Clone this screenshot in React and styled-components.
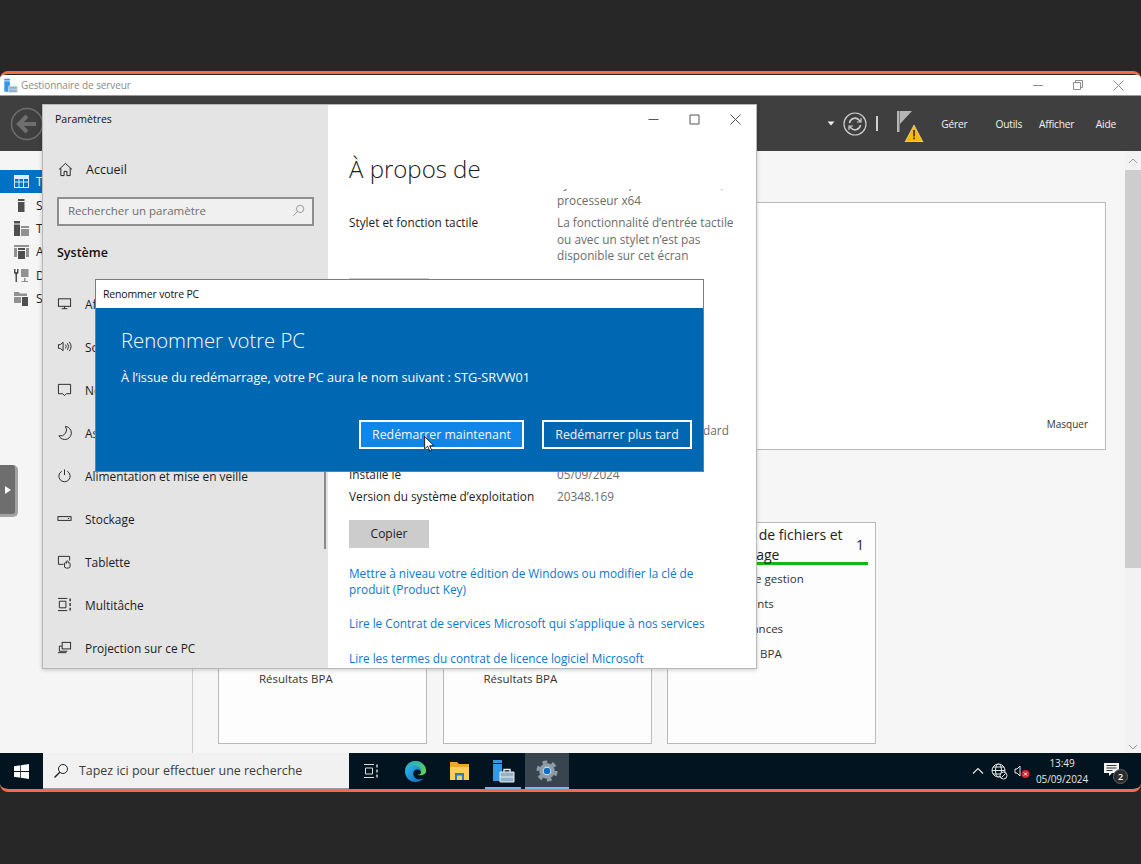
import React from "react";
import styled, { createGlobalStyle } from "styled-components";

const GlobalStyle = createGlobalStyle`
  html, body { margin: 0; padding: 0; background: #272727; }
  body { font-family: "Open Sans", "Noto Sans", sans-serif; height: 864px; overflow: hidden; }
  * { box-sizing: border-box; }
`;

const Screen = styled.div`
  position: relative;
  margin-top: 71px;
  height: 721px;
  border: solid #f26d45;
  border-width: 3px 0;
  border-radius: 8px;
  overflow: hidden;
  display: flex;
  flex-direction: column;
  background: #f5f5f5;
`;

/* ---- gestionnaire de serveur ---- */
const TitleBar = styled.div`
  height: 22px;
  flex: none;
  background: #fff;
  border-top: 1px solid #222;
  border-bottom: 1px solid #9a9a9a;
  display: flex;
  align-items: center;
  padding: 0 17px 0 3px;
  gap: 3px;
`;

const TitleText = styled.span`
  flex: 1;
  font-size: 10px;
  letter-spacing: -0.1px;
  color: #8b8b8b;
`;

const WinControls = styled.div`
  display: flex;
  align-items: center;
  gap: ${(p) => p.$gap}px;
  color: ${(p) => p.$color};
`;

const Toolbar = styled.div`
  height: 55px;
  flex: none;
  background: #3f3f3f;
  display: flex;
  align-items: center;
  padding: 0 25px 0 10px;
`;

const ToolRight = styled.div`
  margin-left: auto;
  display: flex;
  align-items: center;
`;

const Separator = styled.span`
  width: 2px;
  height: 15px;
  background: #cfcfcf;
  margin: 0 19px 0 9px;
`;

const ToolMenu = styled.span`
  font-size: 10.2px;
  letter-spacing: -0.2px;
  color: #f2f2f2;
  margin-left: ${(p) => p.$left}px;
`;

const Main = styled.div`
  flex: 1;
  min-height: 0;
  display: flex;
`;

const Sidebar = styled.div`
  width: 193px;
  flex: none;
  padding-top: 19px;
  background: #f5f5f5;
  border-right: 1px solid #cfcfcf;
`;

const SideItem = styled.div`
  height: 23.4px;
  display: flex;
  align-items: center;
  gap: 7px;
  padding-left: 14px;
  font-size: 12px;
  white-space: nowrap;
  color: ${(p) => (p.$active ? "#fff" : "#222")};
  background: ${(p) => (p.$active ? "#0072c6" : "transparent")};
`;

const Content = styled.div`
  flex: 1;
  min-width: 0;
  padding: 51px 19px 0 25px;
  background: #f6f6f6;
`;

const WelcomeBox = styled.div`
  height: 248px;
  background: #fff;
  border: 1px solid #b9b9b9;
  display: flex;
  align-items: flex-end;
  justify-content: flex-end;
  padding: 0 17px 18px 0;
  font-size: 10px;
  color: #333;
`;

const Cards = styled.div`
  margin-top: 72px;
  display: grid;
  grid-template-columns: repeat(3, 209px);
  gap: 15.5px;
`;

const Card = styled.div`
  height: 222px;
  background: #fdfdfd;
  border: 1px solid #b9b9b9;
  padding: 1px 7px 0 8px;
`;

const CardHead = styled.div`
  height: 41px;
  border-bottom: 3px solid #12b812;
  display: flex;
  align-items: center;
  justify-content: space-between;
  padding: 4px 4px 0 26px;
  font-size: 14px;
  line-height: 20px;
  color: #222;
`;

const CardTitle = styled.span`
  width: 150px;
`;

const CardList = styled.div`
  padding: 1px 0 0 32px;
`;

const CardItem = styled.div`
  height: 25px;
  line-height: 25px;
  font-size: 11.5px;
  color: #333;
`;

const SideTab = styled.div`
  position: absolute;
  left: 0;
  top: 391px;
  width: 18px;
  height: 52px;
  background: #6e6e6e;
  border-right: 3px solid #a3a3a3;
  border-bottom: 3px solid #a3a3a3;
  border-radius: 0 5px 5px 0;
  display: flex;
  align-items: center;
  justify-content: center;
`;

const ScrollTrack = styled.div`
  width: 16px;
  flex: none;
  background: #f2f2f2;
  display: flex;
  flex-direction: column;
  align-items: center;
  color: #999;
`;

const ScrollThumb = styled.div`
  width: 16px;
  height: 398px;
  margin-top: 3px;
  background: #cdcdcd;
`;

const ScrollGap = styled.div`
  flex: 1;
`;

/* ---- fenetre parametres ---- */
const SettingsWindow = styled.div`
  position: absolute;
  left: 42px;
  top: 30px;
  width: 715px;
  height: 565px;
  display: flex;
  background: #fff;
  border: 1px solid #b8b8b8;
  box-shadow: 0 1px 4px rgba(0, 0, 0, 0.2);
`;

const LeftPane = styled.div`
  width: 285px;
  flex: none;
  background: #e4e4e4;
  position: relative;
  overflow: hidden;
  padding: 0 14px;
`;

const PaneTitle = styled.div`
  height: 28px;
  display: flex;
  align-items: center;
  font-size: 10.5px;
  color: #111;
  margin-left: -2px;
`;

const HomeRow = styled.div`
  height: 36px;
  margin-top: 18px;
  display: flex;
  align-items: center;
  gap: 13px;
  padding-left: 1px;
  font-size: 12.5px;
  color: #1c1c1c;
`;

const SearchBox = styled.div`
  height: 29px;
  margin-top: 10px;
  width: 257px;
  background: #f0f0f0;
  border: 2px solid #8e8e8e;
  display: flex;
  align-items: center;
  justify-content: space-between;
  padding: 0 7px 2px 9px;
  font-size: 11.5px;
  color: #6d6d6d;
`;

const SectionName = styled.div`
  height: 20px;
  margin: 16px 0 20px;
  display: flex;
  align-items: center;
  font-size: 12.5px;
  font-weight: 600;
  color: #111;
`;

const NavRow = styled.div`
  height: 43px;
  display: flex;
  align-items: center;
  gap: 13px;
  font-size: 11.9px;
  color: #1c1c1c;
  white-space: nowrap;
`;

const NavIcon = styled.span`
  width: 15px;
  display: flex;
  justify-content: center;
  color: #222;
`;

const PaneScroll = styled.div`
  position: absolute;
  right: 2px;
  top: 360px;
  width: 2px;
  height: 84px;
  background: #8b8b8b;
`;

const RightPane = styled.div`
  flex: 1;
  min-width: 0;
  display: flex;
  flex-direction: column;
`;

const RightTop = styled.div`
  height: 28px;
  flex: none;
  display: flex;
  justify-content: flex-end;
  align-items: center;
  padding-right: 15px;
`;

const PageTitle = styled.h1`
  margin: 0;
  height: 56px;
  flex: none;
  padding: 14px 0 0 21px;
  font-size: 24px;
  line-height: 44px;
  font-weight: 300;
  color: #1b1b1b;
`;

const ScrollArea = styled.div`
  flex: 1;
  min-height: 0;
  overflow: hidden;
  padding-left: 21px;
`;

const ScrollInner = styled.div`
  margin-top: -14px;
`;

const SpecRow = styled.div`
  display: grid;
  grid-template-columns: 208px 190px;
  margin-bottom: ${(p) => p.$after || 0}px;
  font-size: 11.8px;
  line-height: 16.5px;
  min-height: 22px;
`;

const SpecLabel = styled.div`
  color: #1c1c1c;
`;

const SpecValue = styled.div`
  color: #6c6c6c;
  white-space: ${(p) => (p.$nowrap ? "nowrap" : "normal")};
`;

const CopyButton = styled.div`
  width: 80px;
  height: 28px;
  background: #cccccc;
  display: flex;
  align-items: center;
  justify-content: center;
  font-size: 12px;
  color: #222;
  margin: ${(p) => p.$margin};
`;

const SectionHead = styled.div`
  height: 116px;
  padding-top: 26px;
  font-size: 19px;
  font-weight: 300;
  color: #1b1b1b;
`;

const Link = styled.div`
  width: 362px;
  font-size: 11.8px;
  line-height: 16px;
  color: #0a78d4;
  margin-bottom: ${(p) => p.$after}px;
`;

/* ---- dialogue renommer ---- */
const Dialog = styled.div`
  position: absolute;
  left: 95px;
  top: 205px;
  width: 609px;
  height: 193px;
  border: 1px solid #7c7c7c;
  display: flex;
  flex-direction: column;
`;

const DialogTitle = styled.div`
  height: 28px;
  flex: none;
  background: #fff;
  padding-left: 7px;
  display: flex;
  align-items: center;
  font-size: 10.5px;
  letter-spacing: -0.15px;
  color: #111;
`;

const DialogBody = styled.div`
  flex: 1;
  background: #0067b3;
  padding: 17px 11px 22px 25px;
  color: #fff;
  display: flex;
  flex-direction: column;
`;

const DialogHeading = styled.div`
  font-size: 20.3px;
  line-height: 30px;
  font-weight: 300;
`;

const DialogText = styled.div`
  margin-top: 13px;
  font-size: 12.7px;
  line-height: 18px;
`;

const DialogActions = styled.div`
  margin-top: auto;
  display: flex;
  justify-content: flex-end;
  gap: 18px;
`;

const DialogButton = styled.div`
  width: ${(p) => p.$width}px;
  height: 29px;
  border: 2px solid #fff;
  background: ${(p) => (p.$primary ? "#0f86e8" : "#0067b3")};
  display: flex;
  align-items: center;
  justify-content: center;
  font-size: 12.3px;
  color: #f5f5f5;
`;

const Cursor = styled.svg`
  position: absolute;
  left: 424px;
  top: 362px;
`;

/* ---- barre des taches ---- */
const Taskbar = styled.div`
  height: 36px;
  flex: none;
  background: #02141f;
  display: flex;
  align-items: stretch;
`;

const StartButton = styled.div`
  width: 43px;
  display: flex;
  align-items: center;
  justify-content: center;
`;

const TaskSearch = styled.div`
  width: 306px;
  background: #f1f1f1;
  border-bottom: 1px solid #9c9c9c;
  display: flex;
  align-items: center;
  gap: 10px;
  padding-left: 10px;
  font-size: 12.45px;
  color: #3c3c3c;
`;

const TaskIcon = styled.div`
  position: relative;
  width: 44px;
  display: flex;
  align-items: center;
  justify-content: center;
  background: ${(p) => (p.$active ? "#38454e" : "transparent")};

  &::after {
    content: "";
    display: ${(p) => (p.$open ? "block" : "none")};
    position: absolute;
    bottom: 0;
    left: ${(p) => (p.$active ? 0 : 4)}px;
    right: ${(p) => (p.$active ? 0 : 4)}px;
    height: 2px;
    background: #76b9ed;
  }
`;

const Tray = styled.div`
  margin-left: auto;
  display: flex;
  align-items: center;
  color: #e6e6e6;
  padding-right: 17px;
`;

const Clock = styled.div`
  width: 62px;
  margin: 0 11px 0 0;
  text-align: center;
  font-size: 10px;
  line-height: 16px;
  letter-spacing: -0.1px;
  color: #e8e8e8;
`;

const TrayGap = styled.span`
  width: ${(p) => p.$w}px;
`;

const Notif = styled.div`
  position: relative;
  width: 20px;
  height: 20px;
`;

const NotifBadge = styled.span`
  position: absolute;
  right: -4px;
  bottom: -3px;
  width: 15px;
  height: 15px;
  border-radius: 50%;
  background: #2b2b2b;
  border: 1px solid #666;
  display: flex;
  align-items: center;
  justify-content: center;
  font-size: 9px;
  font-weight: 600;
  color: #fff;
`;

/* ---- icones ---- */
const Line = ({ size = 16, children, ...rest }) => (
  <svg width={size} height={size} viewBox="0 0 16 16" fill="none" stroke="currentColor" strokeWidth="1" {...rest}>
    {children}
  </svg>
);

const navIcons = {
  display: <><rect x="1.5" y="3" width="13" height="8" /><path d="M8 11v2.5M5 13.5h6" /></>,
  sound: <><path d="M1.5 6v4h2l3 2.5v-9L3.5 6z" /><path d="M9 6a3 3 0 0 1 0 4M11 4.5a5.5 5.5 0 0 1 0 7M13 3a8 8 0 0 1 0 10" /></>,
  notif: <path d="M1.5 2.5h13v10H10l-2 2-2-2H1.5z" />,
  moon: <path d="M9 1.5A7 7 0 1 1 2 11.5 6.5 6.5 0 0 0 9 1.5z" />,
  power: <><path d="M8 1.5v6" /><path d="M5 3.5a6 6 0 1 0 6 0" /></>,
  storage: <><rect x="1" y="6" width="14" height="4" /><path d="M11.5 8h1.5" /></>,
  tablet: <><path d="M7 11H1.5V2.500h12V7" /><path d="M8 14v-4c0-1 2-1 2 0V8c0-1 2-1 2 0v1.500c1-.5 2 0 2 1V13a2 2 0 0 1-2 2H10z" /></>,
  multi: <><path d="M1 1.500h10M1 14.500h10M2.500 4.500h7v7h-7z" /><path d="M14 1.500v3M14 6.500v3M14 11.500v3" strokeWidth="1.400" /></>,
  project: <><rect x="5.500" y="2.500" width="9" height="7" /><path d="M5.500 6.500H2.500V12H11M1 13.500h9" /></>,
};

const navItems = [
  ["display", "Affichage"],
  ["sound", "Son"],
  ["notif", "Notifications et actions"],
  ["moon", "Assistant de concentration"],
  ["power", "Alimentation et mise en veille"],
  ["storage", "Stockage"],
  ["tablet", "Tablette"],
  ["multi", "Multitâche"],
  ["project", "Projection sur ce PC"],
];

const sideItems = [
  ["#dbeaf6", "Tableau de bord"],
  ["#4f4f4f", "Serveur local"],
  ["#4f4f4f", "Tous les serveurs"],
  ["#4f4f4f", "AD DS"],
  ["#4f4f4f", "DNS"],
  ["#4f4f4f", "Services de fichiers"],
];

const SideGlyph = ({ color, index }) => (
  <svg width="15" height="15" viewBox="0 0 15 15" fill={color}>
    {index === 0 && <path d="M0 1h15v13H0zM1 5v2.500h3.500V5zM5.500 5v2.500H9V5zM10 5v2.500h4V5zM1 8.500V13h3.500V8.500zM5.500 8.500V13H9V8.500zM10 8.500V13h4V8.500z" fillRule="evenodd" />}
    {index === 1 && <path d="M4 1h6.500v2H4zM4 4h6.500v10H4z" />}
    {index === 2 && (
      <>
        <path d="M0 0h6v2.500H0zM0 3.500h6V15H0z" />
        <path d="M7 5h8v2H7zM7 8h8v7H7z" opacity=".6" />
      </>
    )}
    {index === 3 && (
      <>
        <path d="M0 1h15v2H0zM0 4h3v9H0zM12 4h3v9h-3z" opacity=".6" />
        <path d="M4 4h7v2H4zM4 7h7v8H4z" />
      </>
    )}
    {index === 4 && (
      <>
        <path d="M0 1h1.500v3H3V1h1.500v4L3 6.500V14H1.500V6.500L0 5z" />
        <path d="M7 1h7.500v8H7zM10 10h1.500v3H14v1H7.500v-1H10z" opacity=".6" />
      </>
    )}
    {index === 5 && (
      <>
        <path d="M0 1h5l1 1.500h7V5H0zM0 6h7v6H0z" opacity=".6" />
        <path d="M8 6h6v9H8z" />
      </>
    )}
  </svg>
);

const ServerManagerIcon = ({ size }) => (
  <svg width={size} height={size} viewBox="0 0 24 24">
    <path d="M2 1h9v3H2z" fill="#2f9be8" />
    <path d="M2 5h9v17H2z" fill="#2f9be8" />
    <path d="M9 13h14v10H9z" fill="#8fb1c9" stroke="#e8eef2" strokeWidth="1" />
    <path d="M13 13v-2.500h6V13" fill="none" stroke="#e8eef2" strokeWidth="1.400" />
    <path d="M9 18h14" stroke="#e8eef2" strokeWidth="1" />
  </svg>
);

const cardRows = ["Facilité de gestion", "Événements", "Services", "Performances", "Résultats BPA"];

const App = () => (
  <>
    <GlobalStyle />
    <Screen>
      <TitleBar>
        <ServerManagerIcon size={15} />
        <TitleText>Gestionnaire de serveur</TitleText>
        <WinControls $gap={29} $color="#8c8c8c">
          <Line size={11} viewBox="0 0 11 11"><path d="M0 5.500h10" /></Line>
          <Line size={11} viewBox="0 0 11 11"><path d="M.5 2.500h7v7h-7zM2.500 2.500v-2h7v7h-2" /></Line>
          <Line size={11} viewBox="0 0 11 11"><path d="M.5.5l10 10M10.500.5l-10 10" /></Line>
        </WinControls>
      </TitleBar>

      <Toolbar>
        <svg width="34" height="34" viewBox="0 0 34 34" fill="none">
          <circle cx="17" cy="17" r="15.500" stroke="#6f6f6f" strokeWidth="1.500" />
          <path d="M26 17H10M17 9l-8 8 8 8" stroke="#6f6f6f" strokeWidth="4" />
        </svg>
        <ToolRight>
          <svg width="8" height="5" viewBox="0 0 8 5" style={{ marginRight: 8 }}><path d="M.5.500h7L4 4.500z" fill="#eee" /></svg>
          <svg width="24" height="24" viewBox="0 0 24 24" fill="none" stroke="#cfcfcf">
            <circle cx="12" cy="12" r="11" strokeWidth="1.200" />
            <path d="M6.500 11a5.500 5.500 0 0 1 9.500-3l1.500 1.500M17.500 13A5.500 5.500 0 0 1 8 16l-1.500-1.500" strokeWidth="1.600" />
            <path d="M18 6v4h-4M6 18v-4h4" strokeWidth="1.200" />
          </svg>
          <Separator />
          <svg width="28" height="31" viewBox="0 0 28 31" style={{ marginTop: 5 }}>
            <path d="M0 0h2.500v21H0zM3 0h12L3 13z" fill="#b5b5b5" />
            <path d="M17 14l9 17H8z" fill="#fcb900" stroke="#fff" strokeWidth=".5" />
            <path d="M16.300 19h1.500v6.500h-1.500zM16.300 26.500h1.500v1.800h-1.500z" fill="#222" />
          </svg>
          <ToolMenu $left={16}>Gérer</ToolMenu>
          <ToolMenu $left={28}>Outils</ToolMenu>
          <ToolMenu $left={17}>Afficher</ToolMenu>
          <ToolMenu $left={21.5}>Aide</ToolMenu>
        </ToolRight>
      </Toolbar>

      <Main>
        <Sidebar>
          {sideItems.map(([color, label], i) => (
            <SideItem key={label} $active={i === 0}>
              <SideGlyph color={color} index={i} />
              {label}
            </SideItem>
          ))}
        </Sidebar>
        <Content>
          <WelcomeBox>Masquer</WelcomeBox>
          <Cards>
            <Card>
              <CardHead><CardTitle>AD DS</CardTitle>1</CardHead>
              <CardList>{cardRows.map((r) => <CardItem key={r}>{r}</CardItem>)}</CardList>
            </Card>
            <Card>
              <CardHead><CardTitle>DNS</CardTitle>1</CardHead>
              <CardList>{cardRows.map((r) => <CardItem key={r}>{r}</CardItem>)}</CardList>
            </Card>
            <Card>
              <CardHead><CardTitle>Services de fichiers et de stockage</CardTitle>1</CardHead>
              <CardList>
                {cardRows.filter((r) => r !== "Services").map((r) => <CardItem key={r}>{r}</CardItem>)}
              </CardList>
            </Card>
          </Cards>
        </Content>
        <ScrollTrack>
          <Line size={12} viewBox="0 0 12 12" style={{ marginTop: 4 }}><path d="M2 8l4-4 4 4" /></Line>
          <ScrollThumb />
          <ScrollGap />
          <Line size={12} viewBox="0 0 12 12"><path d="M2 4l4 4 4-4" /></Line>
        </ScrollTrack>
      </Main>

      <Taskbar>
        <StartButton>
          <svg width="15" height="15" viewBox="0 0 15 15" fill="#fff">
            <path d="M0 2.200l6.300-.9v5.800H0zM7 1.200L15 0v7.100H7zM0 7.900h6.300v5.800L0 12.800zM7 7.900h8V15l-8-1.200z" />
          </svg>
        </StartButton>
        <TaskSearch>
          <Line size={16} style={{ color: "#222" }}>
            <circle cx="10" cy="6" r="4.500" />
            <path d="M6.800 9.200L1.500 14.500" strokeWidth="1.400" />
          </Line>
          Tapez ici pour effectuer une recherche
        </TaskSearch>
        <TaskIcon>
          <Line size={16} style={{ color: "#ddd" }}>
            <path d="M1 1.500h10M1 14.500h10M2.500 5h7v6h-7z" />
            <path d="M14 1.500v3M14 6.500v3M14 11.500v3" strokeWidth="1.400" />
          </Line>
        </TaskIcon>
        <TaskIcon>
          <svg width="23" height="23" viewBox="0 0 24 24">
            <defs>
              <linearGradient id="edgeA" x1="0" y1="0" x2="1" y2="1">
                <stop offset="0" stopColor="#35c1f1" />
                <stop offset="1" stopColor="#0b62b8" />
              </linearGradient>
              <linearGradient id="edgeB" x1="0" y1="0" x2="1" y2="1">
                <stop offset="0" stopColor="#1aa5d8" />
                <stop offset="1" stopColor="#6fd840" />
              </linearGradient>
            </defs>
            <path d="M12 1a11 11 0 0 0-11 11c0 6 5 11 11 11 3.500 0 6.500-1.500 8.500-4-3 1.500-7 1.500-9-.5-2-2-2.500-5-1-7 .8-1 2-1.500 3.500-1.500 2.500 0 4 1.500 3.500 4h5c0-7-4.500-13-10.500-13z" fill="url(#edgeA)" />
            <path d="M12 1C6 1 1.500 5.500 1 11c2-4 6-6 10-5.500 4.500.5 7.500 3 7 7.500-.2 1.500-2 2.500-4 2 3 2 9 1 9-4C23 5.500 18 1 12 1z" fill="url(#edgeB)" />
          </svg>
        </TaskIcon>
        <TaskIcon>
          <svg width="21" height="19" viewBox="0 0 21 19">
            <path d="M1 0h7l2 2h10v3H1z" fill="#e8a92c" />
            <path d="M1 5h19v13H1z" fill="#f8cf5a" />
            <path d="M6 11h9v7H6z" fill="#2a7fc4" />
            <path d="M8 13.500h5V18H8z" fill="#f8cf5a" />
          </svg>
        </TaskIcon>
        <TaskIcon $open><ServerManagerIcon size={24} /></TaskIcon>
        <TaskIcon $open $active>
          <svg width="22" height="22" viewBox="0 0 22 22" fill="none">
            <circle cx="11" cy="11" r="9" stroke="#8f9ba5" strokeWidth="3.200" strokeDasharray="4.700 4.720" />
            <circle cx="11" cy="11" r="6" stroke="#8f9ba5" strokeWidth="3.600" />
            <circle cx="11" cy="11" r="4.400" fill="#d9e4ec" />
            <circle cx="11" cy="11" r="3.300" fill="#0f6cc8" />
          </svg>
        </TaskIcon>
        <Tray>
          <Line size={12} viewBox="0 0 12 12"><path d="M1 8.500l5-5 5 5" strokeWidth="1.200" /></Line>
          <TrayGap $w={7} />
          <svg width="17" height="17" viewBox="0 0 17 17" fill="none" stroke="#e6e6e6">
            <circle cx="7.500" cy="7.500" r="6.500" />
            <ellipse cx="7.500" cy="7.500" rx="3" ry="6.500" />
            <path d="M1 7.500h13M2 4h11M2 11h11" />
            <circle cx="12.500" cy="12.500" r="3.500" fill="#02141f" />
            <path d="M10.500 14.500l4-4" />
          </svg>
          <TrayGap $w={6} />
          <svg width="17" height="15" viewBox="0 0 17 15" fill="none">
            <path d="M1 5v4h2l3 3V2L3 5z" stroke="#e6e6e6" />
            <circle cx="11.500" cy="10" r="4" fill="#e3202f" />
            <path d="M10 8.500l3 3M13 8.500l-3 3" stroke="#fff" />
          </svg>
          <Clock>
            <div>13:49</div>
            <div>05/09/2024</div>
          </Clock>
          <Notif>
            <svg width="18" height="16" viewBox="0 0 18 16" fill="#f2f2f2">
              <path d="M0 1h15v10H8l-3 3v-3H0z" />
              <path d="M2.500 3.500h10M2.500 6h10M2.500 8.500h6" stroke="#333" />
            </svg>
            <NotifBadge>2</NotifBadge>
          </Notif>
        </Tray>
      </Taskbar>

      <SideTab>
        <svg width="6" height="8" viewBox="0 0 6 8"><path d="M0 0l6 4-6 4z" fill="#fff" /></svg>
      </SideTab>

      <SettingsWindow>
        <LeftPane>
          <PaneTitle>Paramètres</PaneTitle>
          <HomeRow>
            <Line size={15}><path d="M1 8l7-6.500L15 8M3 6.500V14.500h3.500V10h3v4.500H13V6.500" /></Line>
            Accueil
          </HomeRow>
          <SearchBox>
            Rechercher un paramètre
            <Line size={13} style={{ color: "#888" }}><circle cx="10" cy="6" r="4.500" /><path d="M6.800 9.200L1.500 14.500" /></Line>
          </SearchBox>
          <SectionName>Système</SectionName>
          {navItems.map(([icon, label]) => (
            <NavRow key={label}>
              <NavIcon><Line size={15}>{navIcons[icon]}</Line></NavIcon>
              {label}
            </NavRow>
          ))}
          <PaneScroll />
        </LeftPane>
        <RightPane>
          <RightTop>
            <WinControls $gap={30} $color="#555">
              <Line size={11} viewBox="0 0 11 11"><path d="M.5 5.500h10" /></Line>
              <Line size={11} viewBox="0 0 11 11"><path d="M1 1h9v9H1z" /></Line>
              <Line size={11} viewBox="0 0 11 11"><path d="M.5.5l10 10M10.500.5l-10 10" /></Line>
            </WinControls>
          </RightTop>
          <PageTitle>À propos de</PageTitle>
          <ScrollArea>
            <ScrollInner>
              <SpecRow $after={6}>
                <SpecLabel />
                <SpecValue>Système d’exploitation 64 bits, processeur x64</SpecValue>
              </SpecRow>
              <SpecRow $after={14}>
                <SpecLabel>Stylet et fonction tactile</SpecLabel>
                <SpecValue>La fonctionnalité d’entrée tactile ou avec un stylet n’est pas disponible sur cet écran</SpecValue>
              </SpecRow>
              <CopyButton>Copier</CopyButton>
              <SectionHead>Spécifications de Windows</SectionHead>
              <SpecRow><SpecLabel>Édition</SpecLabel><SpecValue $nowrap>Windows Server 2022 Standard</SpecValue></SpecRow>
              <SpecRow><SpecLabel>Version</SpecLabel><SpecValue>21H2</SpecValue></SpecRow>
              <SpecRow><SpecLabel>Installé le</SpecLabel><SpecValue>05/09/2024</SpecValue></SpecRow>
              <SpecRow><SpecLabel>Version du système d’exploitation</SpecLabel><SpecValue>20348.169</SpecValue></SpecRow>
              <CopyButton $margin="10px 0 17px">Copier</CopyButton>
              <Link $after={18}>Mettre à niveau votre édition de Windows ou modifier la clé de produit (Product Key)</Link>
              <Link $after={19}>Lire le Contrat de services Microsoft qui s’applique à nos services</Link>
              <Link $after={0}>Lire les termes du contrat de licence logiciel Microsoft</Link>
            </ScrollInner>
          </ScrollArea>
        </RightPane>
      </SettingsWindow>

      <Dialog>
        <DialogTitle>Renommer votre PC</DialogTitle>
        <DialogBody>
          <DialogHeading>Renommer votre PC</DialogHeading>
          <DialogText>À l’issue du redémarrage, votre PC aura le nom suivant : STG-SRVW01</DialogText>
          <DialogActions>
            <DialogButton $primary $width={165}>Redémarrer maintenant</DialogButton>
            <DialogButton $width={150}>Redémarrer plus tard</DialogButton>
          </DialogActions>
        </DialogBody>
      </Dialog>

      <Cursor width="11" height="16" viewBox="0 0 12 18">
        <path d="M.5.500v14l3.500-3 2.300 5.500 2.200-1-2.300-5h4.800z" fill="#fff" stroke="#111" strokeWidth="1" />
      </Cursor>
    </Screen>
  </>
);

export default App;
